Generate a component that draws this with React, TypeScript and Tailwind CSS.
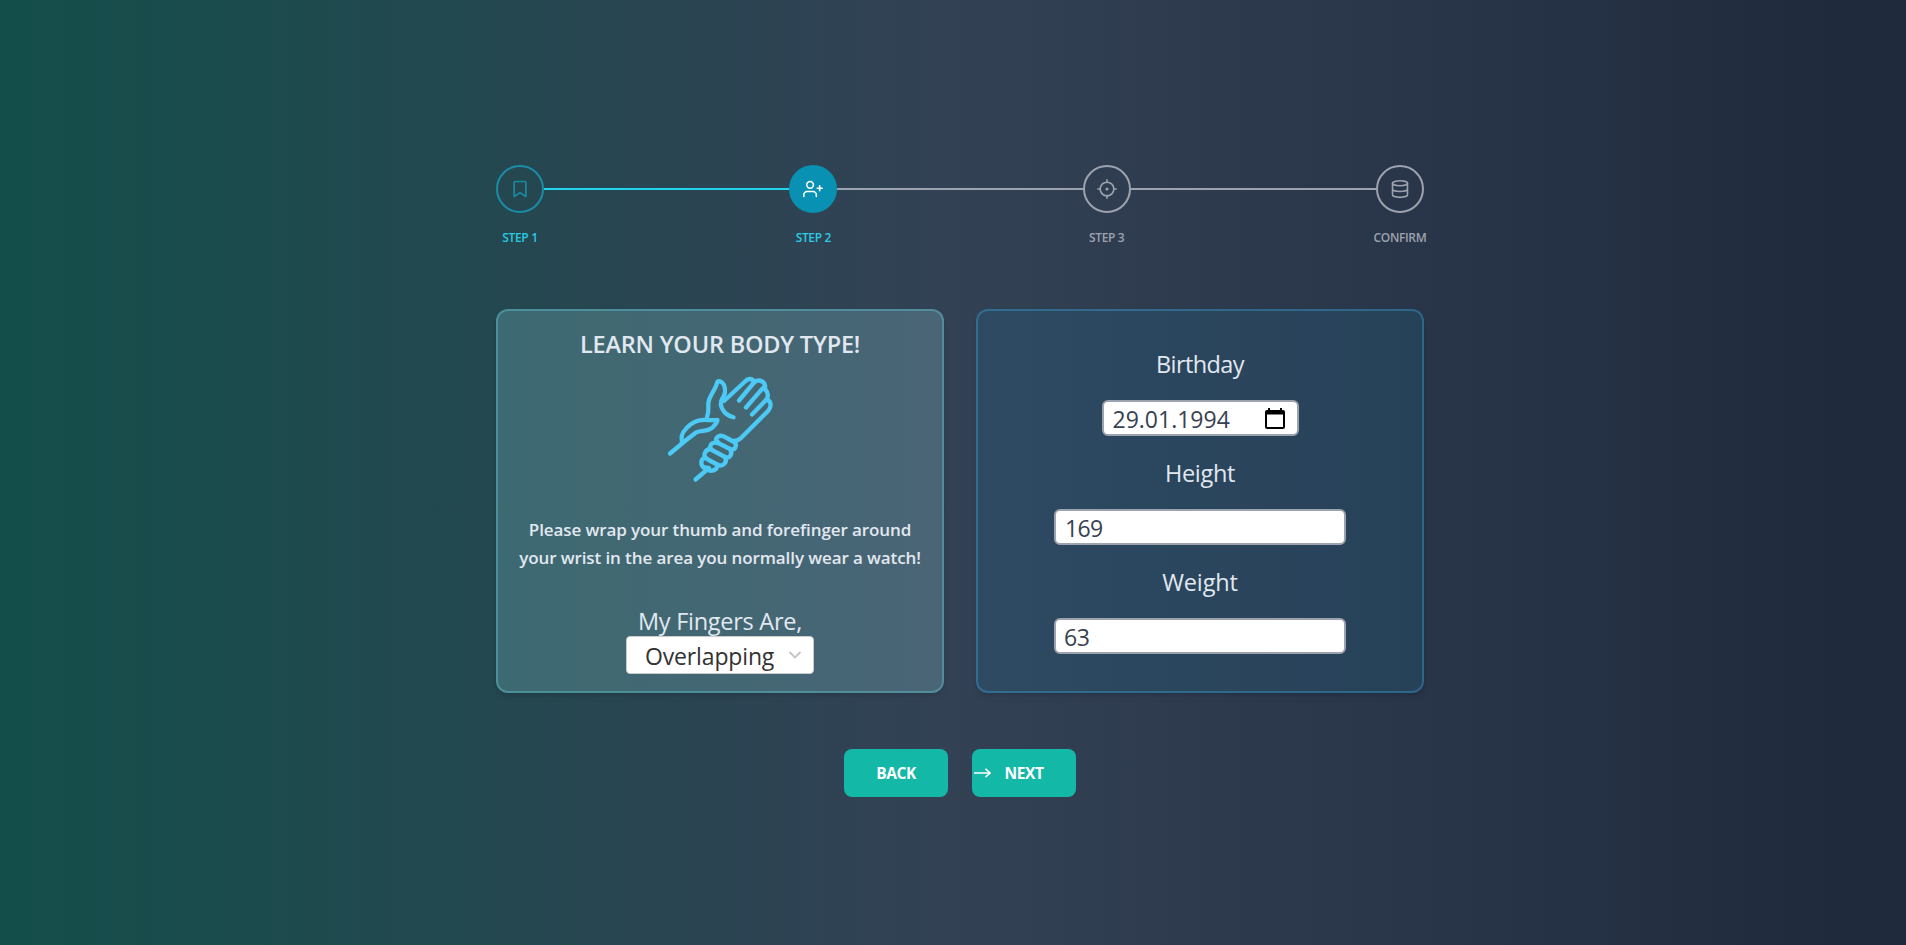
import React from "react";

const font = "font-['Open_Sans','Noto_Sans',sans-serif]";

function Icon({ children }: { children: React.ReactNode }) {
  return (
    <svg
      viewBox="0 0 24 24"
      className="h-5 w-5"
      fill="none"
      stroke="currentColor"
      strokeWidth="1.9"
      strokeLinecap="round"
      strokeLinejoin="round"
    >
      {children}
    </svg>
  );
}

function Step({ label, circle, text, children }: { label: string; circle: string; text: string; children: React.ReactNode }) {
  return (
    <div className="flex w-12 flex-col items-center">
      <div className={"flex h-12 w-12 items-center justify-center rounded-full border-2 " + circle}>{children}</div>
      <span className={"mt-[17px] text-xs leading-4 font-semibold whitespace-nowrap tracking-[-0.35px] " + text}>{label}</span>
    </div>
  );
}

function Hands() {
  return (
    <svg
      viewBox="0 0 140 125"
      className="h-[125px] w-[140px]"
      fill="none"
      stroke="#4cc9f5"
      strokeWidth="4.3"
      strokeLinecap="round"
      strokeLinejoin="round"
    >
      <path d="M57 52C60 45 57 41 59 35C61 29 66 23 67 18C68 15 72 16 74 20C76 25 75 30 72 34C70 38 71 42 73 45C75 49 79 51 83.500 52.300" />
      <path d="M74 36L95 16.500C98 13 103 13 104 17.500C109 13.500 116 16 115 24" />
      <path d="M104 17.500L89 35.500M113 23L96 42.500M115 24C118.500 28 118.500 32 116 35L102 49.500M116 35C121 35 122 41 118.500 45.500L91 73C89 75 86 76 83.500 76" />
      <path d="M20 88.500L35 76L46 67.500C52 65 58 67 63 62C65.500 59.500 67 57.500 67.500 55C59 56 55 53.500 47 56C42 58 38 61 35 65C32 68 31 72 32 77" />
      <path d="M67 78C64 72 70 69 75 72L84 77C88 80 85 86 80 84L70 79C68 78 67 76 67 75" />
      <path d="M68 78C61 76 58 82 62 85L75 92C80 94 83 89 80 84" />
      <path d="M61 84C55 84 52 91 57 94L68 100C73 102 78 97 75 92" />
      <path d="M56 93C51 93 50 98 53 102C57 106 62 107 66 104L68 100M54 102L59 103L45.500 114.500" />
    </svg>
  );
}

function Field({ label, tracking, children }: { label: string; tracking: string; children: React.ReactNode }) {
  return (
    <div className="flex flex-col items-center">
      <label className={"h-8 text-[23.5px] leading-8 text-[#e2e8f0] " + tracking}>{label}</label>
      {children}
    </div>
  );
}

const inputBox =
  "mt-5 flex h-9 items-center rounded-md border-2 border-[#9ca3af] bg-white text-[23px] leading-8 text-[#374151]";

export default function App() {
  return (
    <div
      className={
        "flex h-[945px] w-full justify-center overflow-hidden bg-linear-to-r/srgb from-[#134e4a] via-[#334155] to-[#1e293b] pl-[14px] " + font
      }
    >
      <main className="flex w-[928px] flex-col pt-[165px]">
        <div className="flex h-[144px] items-start">
          <Step label="STEP 1" circle="border-[#1a8ca6] text-[#1a8ca6]" text="text-[#2bcbe3]">
            <Icon>
              <path d="M19 21l-7-4.700L5 21V4q0-1 1-1h12q1 0 1 1z" />
            </Icon>
          </Step>
          <div className="mt-[23px] h-[2px] flex-1 bg-[#22d3ee]" />
          <Step label="STEP 2" circle="border-[#0891b2] bg-[#0891b2] text-white" text="text-[#2bcbe3]">
            <Icon>
              <path d="M16 21v-2a4 4 0 0 0-4-4H5a4 4 0 0 0-4 4v2" />
              <circle cx="8.5" cy="7" r="4" />
              <path d="M20 8v6M23 11h-6" />
            </Icon>
          </Step>
          <div className="mt-[23px] h-[2px] flex-1 bg-[#9ca3af]" />
          <Step label="STEP 3" circle="border-[#9ca3af] text-[#9ca3af]" text="text-[#9ca3af]">
            <Icon>
              <circle cx="12" cy="12" r="8.2" />
              <circle cx="12" cy="12" r="0.9" />
              <path d="M12 1v3M12 20v3M1 12h3M20 12h3" />
            </Icon>
          </Step>
          <div className="mt-[23px] h-[2px] flex-1 bg-[#9ca3af]" />
          <Step label="CONFIRM" circle="border-[#9ca3af] text-[#9ca3af]" text="text-[#9ca3af]">
            <Icon>
              <ellipse cx="12" cy="5" rx="9" ry="3" />
              <path d="M21 12c0 1.660-4 3-9 3s-9-1.340-9-3M3 5v14c0 1.660 4 3 9 3s9-1.340 9-3V5" />
            </Icon>
          </Step>
        </div>

        <div className="flex gap-8">
          <section className="flex h-96 w-[448px] flex-col items-center rounded-xl border-2 border-[#67e8f9]/30 bg-[#a5f3fc]/20 pt-[17px] shadow-md">
            <h2 className="h-8 text-[23.5px] leading-8 font-semibold tracking-[-0.2px] text-[#e2e8f0]">LEARN YOUR BODY TYPE!</h2>
            <div className="mt-[5px] h-[125px]">
              <Hands />
            </div>
            <p className="mt-[26px] text-center text-[17px] leading-7 font-semibold tracking-[-0.1px] whitespace-nowrap text-[#e2e8f0]">
              Please wrap your thumb and forefinger around
              <br />
              your wrist in the area you normally wear a watch!
            </p>
            <div className="mt-[33px] h-[31px] text-[23.5px] leading-8 tracking-[-0.27px] text-[#e2e8f0]">My Fingers Are,</div>
            <div className="flex h-[38px] w-[188px] items-center justify-between rounded border border-[#ccc] bg-white pr-[11px] pl-[18px] text-[23px] leading-8 text-[#333]">
              <span className="relative top-px tracking-[-0.15px]">Overlapping</span>
              <svg viewBox="0 0 14 14" className="h-[14px] w-[14px]" fill="none" stroke="#c4c4c4" strokeWidth="1.8">
                <path d="M1.500 4L7 9.500L12.500 4" />
              </svg>
            </div>
          </section>

          <section className="flex h-96 w-[448px] flex-col items-center gap-[21px] rounded-xl border-2 border-[#38bdf8]/30 bg-[#1e729b]/20 pt-[37px] shadow-md">
            <Field label="Birthday" tracking="tracking-[-0.6px]">
              <div className={inputBox + " w-[197px] justify-between pr-[12px] pl-[9px]"}>
                <span className="pt-0.5">29.01.1994</span>
                <svg viewBox="0 0 20 22" className="h-[22px] w-5" fill="#000">
                  <path fillRule="evenodd" d="M3 1h2v2h10V1h2v2h1q2 0 2 2v15q0 2-2 2H2q-2 0-2-2V5q0-2 2-2h1zM2 7.500v12.500h16V7.500z" />
                </svg>
              </div>
            </Field>
            <Field label="Height" tracking="tracking-[-0.3px]">
              <div className={inputBox + " w-[292px] pt-0.5 pl-[9px] tracking-[-0.6px]"}>169</div>
            </Field>
            <Field label="Weight" tracking="tracking-[-0.15px]">
              <div className={inputBox + " w-[292px] pt-0.5 pl-[8px] tracking-[-0.4px]"}>63</div>
            </Field>
          </section>
        </div>

        <div className="mt-14 flex justify-center gap-6">
          <button className="h-12 w-[104px] rounded-lg bg-[#14b8a6] pt-0.5 text-[15.5px] font-bold tracking-[-0.4px] text-white">BACK</button>
          <button className="relative h-12 w-[104px] rounded-lg bg-[#14b8a6] pt-0.5 text-[15.5px] font-bold tracking-[-0.4px] text-white">
            <svg viewBox="0 0 18 12" className="absolute top-[18px] left-px h-3 w-[18px]" fill="none" stroke="#fff" strokeWidth="1.6">
              <path d="M1 6H17M12.500 1.800L17 6L12.500 10.200" />
            </svg>
            NEXT
          </button>
        </div>
      </main>
    </div>
  );
}
